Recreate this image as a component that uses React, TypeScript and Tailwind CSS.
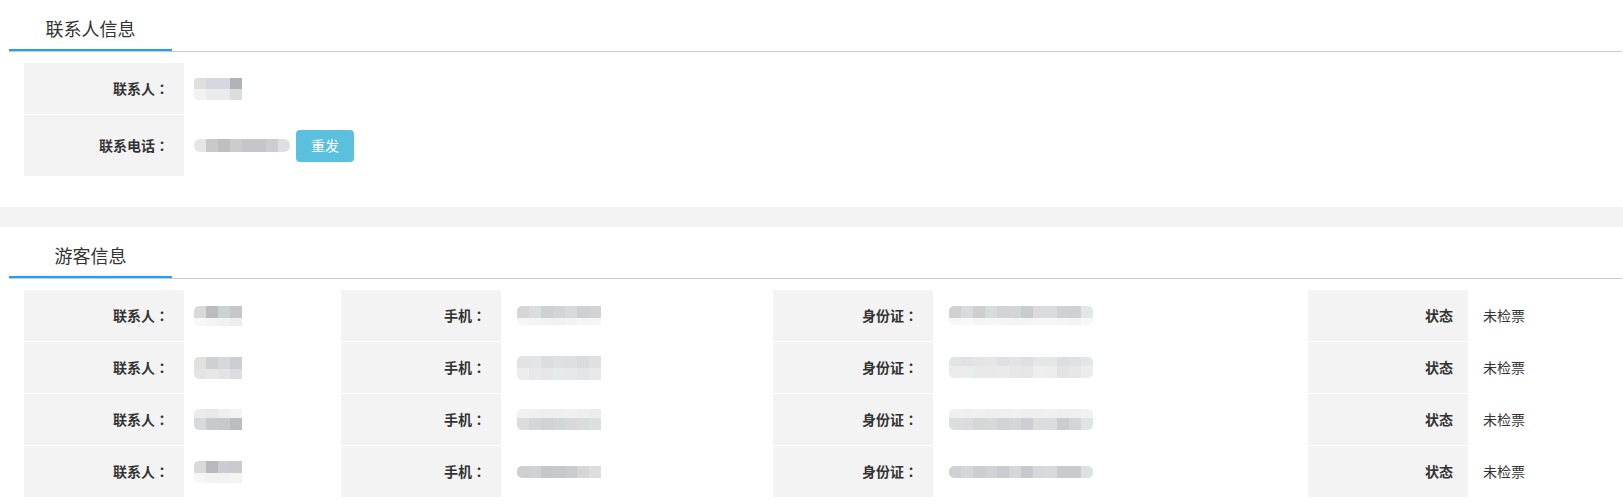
import React from 'react';

type PixRow = { h: string; c: string[] };

function Pix({ rows, className = '' }: { rows: PixRow[]; className?: string }) {
  return (
    <div className={`flex flex-col overflow-hidden ${className}`}>
      {rows.map((r, i) => (
        <div key={i} className={`flex ${r.h}`}>
          {r.c.map((c, j) => (
            <div key={j} className={`w-[12px] shrink-0 ${c}`} />
          ))}
        </div>
      ))}
    </div>
  );
}

function Header({ title }: { title: string }) {
  return (
    <div className="ml-[9px] mr-[1px] flex border-b border-[#cccccc]">
      <div className="h-[51px] w-[163px] border-b-2 border-[#1e9fff] pt-[8px] text-center text-[18px] leading-[40px] text-[#333333]">
        {title}
      </div>
    </div>
  );
}

function Label({ text, colon = true }: { text: string; colon?: boolean }) {
  return (
    <div className="flex items-center justify-end bg-[#f3f3f3] pr-[15px] text-[14px] font-bold text-[#333333]">
      <span>{text}</span>
      {colon && <span className="font-['Noto_Sans_CJK_TC','Noto_Sans_CJK_SC',sans-serif]">：</span>}
    </div>
  );
}

const name1: PixRow[] = [
  { h: 'h-[11px]', c: ['bg-[#e0dfdf]', 'bg-[#d5d8de]', 'bg-[#d5d8de]', 'bg-[#b0b4b9]'] },
  { h: 'h-[11px]', c: ['bg-[#f3f2f1]', 'bg-[#ebebed]', 'bg-[#ebebed]', 'bg-[#dcdcde]'] },
];
const phone1: PixRow[] = [
  {
    h: 'h-[13px]',
    c: ['bg-[#e6e6e6]', 'bg-[#c9c9c9]', 'bg-[#bcbfc3]', 'bg-[#cbcdcc]', 'bg-[#c3c7c9]', 'bg-[#c6c6ca]', 'bg-[#cbcdd0]', 'bg-[#dde0e3]'],
  },
];

const names: PixRow[][] = [
  [
    { h: 'h-[12px]', c: ['bg-[#d9d9d9]', 'bg-[#bcbbbf]', 'bg-[#cbd2d5]', 'bg-[#c6c7cb]'] },
    { h: 'h-[8px]', c: ['bg-[#f7f7f7]', 'bg-[#f4f4f4]', 'bg-[#f1f1f3]', 'bg-[#eeeef0]'] },
  ],
  [
    { h: 'h-[12px]', c: ['bg-[#e0e0dc]', 'bg-[#cfd0d6]', 'bg-[#d6d7d9]', 'bg-[#cbcdd0]'] },
    { h: 'h-[10px]', c: ['bg-[#e4e4e4]', 'bg-[#e6e7e9]', 'bg-[#e4e4e6]', 'bg-[#dcdde0]'] },
  ],
  [
    { h: 'h-[9px]', c: ['bg-[#ebebeb]', 'bg-[#e9e9ea]', 'bg-[#eeeeee]', 'bg-[#f4f4f4]'] },
    { h: 'h-[12px]', c: ['bg-[#d8d9db]', 'bg-[#c9cacc]', 'bg-[#c6c9cb]', 'bg-[#b9bec1]'] },
  ],
  [
    { h: 'h-[12px]', c: ['bg-[#d9d9d7]', 'bg-[#b9b9bb]', 'bg-[#c9ccd1]', 'bg-[#cacbce]'] },
    { h: 'h-[10px]', c: ['bg-[#f6f6f6]', 'bg-[#f3f3f3]', 'bg-[#f2f2f2]', 'bg-[#f4f4f4]'] },
  ],
];

const phones: PixRow[][] = [
  [
    { h: 'h-[12px]', c: ['bg-[#d6d6d6]', 'bg-[#dcdce0]', 'bg-[#cfd0d4]', 'bg-[#d3d4d8]', 'bg-[#d8dadd]', 'bg-[#cfd0d2]', 'bg-[#d3d3d5]'] },
    { h: 'h-[7px]', c: ['bg-[#f6f6f6]', 'bg-[#f4f4f5]', 'bg-[#f3f3f4]', 'bg-[#f1f1f3]', 'bg-[#f3f3f4]', 'bg-[#f5f5f5]', 'bg-[#f6f6f6]'] },
  ],
  [
    { h: 'h-[12px]', c: ['bg-[#e3e3e5]', 'bg-[#e4e5e7]', 'bg-[#dcdde1]', 'bg-[#dfe0e2]', 'bg-[#dedfe1]', 'bg-[#dadbdd]', 'bg-[#dfe0e2]'] },
    { h: 'h-[12px]', c: ['bg-[#ededed]', 'bg-[#e8e8ea]', 'bg-[#e6e6e8]', 'bg-[#e8e9eb]', 'bg-[#e7e8ea]', 'bg-[#e4e5e7]', 'bg-[#e8e9eb]'] },
  ],
  [
    { h: 'h-[9px]', c: ['bg-[#f1f1f1]', 'bg-[#efeff0]', 'bg-[#eeeeef]', 'bg-[#efeff0]', 'bg-[#f0f0f1]', 'bg-[#eeeeef]', 'bg-[#ececed]'] },
    { h: 'h-[12px]', c: ['bg-[#dcdcde]', 'bg-[#d5d6da]', 'bg-[#d1d2d6]', 'bg-[#d4d5d9]', 'bg-[#d9d9db]', 'bg-[#dcdcdc]', 'bg-[#dedfe3]'] },
  ],
  [
    { h: 'h-[12px]', c: ['bg-[#cfcfcf]', 'bg-[#d0d1d5]', 'bg-[#c6c7cb]', 'bg-[#c7c8cc]', 'bg-[#cbccd0]', 'bg-[#d6d6d6]', 'bg-[#dedee0]'] },
  ],
];

const ids: PixRow[][] = [
  [
    {
      h: 'h-[12px]',
      c: ['bg-[#d0d0d2]', 'bg-[#d9dadc]', 'bg-[#cfcfcf]', 'bg-[#d8dadd]', 'bg-[#d2d3d7]', 'bg-[#d5d5d7]', 'bg-[#c8cbd0]', 'bg-[#dbdbdd]', 'bg-[#dadbdd]', 'bg-[#d0d1d5]', 'bg-[#cfd0d4]', 'bg-[#e5e6e8]'],
    },
    {
      h: 'h-[7px]',
      c: ['bg-[#f7f7f7]', 'bg-[#f8f8f8]', 'bg-[#f5f5f5]', 'bg-[#f6f6f6]', 'bg-[#f5f5f6]', 'bg-[#f4f4f5]', 'bg-[#f5f5f6]', 'bg-[#f6f6f6]', 'bg-[#f6f6f7]', 'bg-[#f5f5f6]', 'bg-[#f4f4f5]', 'bg-[#f7f7f7]'],
    },
  ],
  [
    {
      h: 'h-[9px]',
      c: ['bg-[#e2e3e5]', 'bg-[#e0e1e3]', 'bg-[#e3e4e6]', 'bg-[#e6e6e6]', 'bg-[#dfe0e4]', 'bg-[#e3e3e5]', 'bg-[#dedfe3]', 'bg-[#e6e6e8]', 'bg-[#e5e6e8]', 'bg-[#dcdde1]', 'bg-[#dfe0e2]', 'bg-[#e4e5e9]'],
    },
    {
      h: 'h-[12px]',
      c: ['bg-[#ebebeb]', 'bg-[#ececee]', 'bg-[#e8e9eb]', 'bg-[#e9e9e9]', 'bg-[#e9eaec]', 'bg-[#e6e7e9]', 'bg-[#e5e6e8]', 'bg-[#eeeeee]', 'bg-[#ededed]', 'bg-[#e2e3e5]', 'bg-[#e6e7e9]', 'bg-[#ececee]'],
    },
  ],
  [
    {
      h: 'h-[9px]',
      c: ['bg-[#f0f0f0]', 'bg-[#efefef]', 'bg-[#f0f0f1]', 'bg-[#eeeeef]', 'bg-[#efeff0]', 'bg-[#f0f0f1]', 'bg-[#eeeeef]', 'bg-[#efeff0]', 'bg-[#f0f0f1]', 'bg-[#eeeeef]', 'bg-[#efefef]', 'bg-[#f1f1f1]'],
    },
    {
      h: 'h-[12px]',
      c: ['bg-[#dcdde1]', 'bg-[#dcdcde]', 'bg-[#d6d6d6]', 'bg-[#d7d8dc]', 'bg-[#d0d3d8]', 'bg-[#d5d6da]', 'bg-[#ccd0d5]', 'bg-[#dddddf]', 'bg-[#dcdde1]', 'bg-[#cbccd0]', 'bg-[#d4d5d9]', 'bg-[#e2e3e5]'],
    },
  ],
  [
    {
      h: 'h-[12px]',
      c: ['bg-[#cfd0d4]', 'bg-[#d6d7db]', 'bg-[#cdcdcd]', 'bg-[#d1d2d6]', 'bg-[#c8cbd0]', 'bg-[#d5d6da]', 'bg-[#c5c8cd]', 'bg-[#d7d8dc]', 'bg-[#d9dadc]', 'bg-[#c9cacc]', 'bg-[#c9cacc]', 'bg-[#dfe0e2]'],
    },
  ],
];

export default function App() {
  return (
    <div className="w-[1623px] bg-white font-['Noto_Sans_CJK_SC','Liberation_Sans',sans-serif]">
      <div className="pb-[31px]">
        <Header title="联系人信息" />
        <div className="mx-[24px] mt-[11px] grid grid-cols-[160px_1fr] grid-rows-[51px_61px] gap-y-px">
          <Label text="联系人" />
          <div className="flex items-center pl-[10px]">
            <Pix rows={name1} className="rounded-l-[4px]" />
          </div>
          <Label text="联系电话" />
          <div className="flex items-center pl-[10px]">
            <Pix rows={phone1} className="rounded-[6px]" />
            <button className="ml-[6px] h-[32px] w-[58px] rounded-[4px] bg-[#5bc0de] text-[14px] text-white">
              重发
            </button>
          </div>
        </div>
      </div>
      <div className="h-[20px] bg-[#f3f3f3]" />
      <div className="pb-[7px]">
        <Header title="游客信息" />
        <div className="mx-[24px] mt-[11px] grid grid-cols-[160px_157px_160px_272px_160px_375px_160px_131px] auto-rows-[51px] gap-y-px">
          {[0, 1, 2, 3].map((i) => (
            <React.Fragment key={i}>
              <Label text="联系人" />
              <div className="flex items-center pl-[10px]">
                <Pix rows={names[i]} className="rounded-l-[5px]" />
              </div>
              <Label text="手机" />
              <div className="flex items-center pl-[16px]">
                <Pix rows={phones[i]} className="rounded-l-[5px]" />
              </div>
              <Label text="身份证" />
              <div className="flex items-center pl-[16px]">
                <Pix rows={ids[i]} className="rounded-[5px]" />
              </div>
              <Label text="状态" colon={false} />
              <div className="flex items-center pl-[15px] text-[14px] text-[#333333]">未检票</div>
            </React.Fragment>
          ))}
        </div>
      </div>
    </div>
  );
}
